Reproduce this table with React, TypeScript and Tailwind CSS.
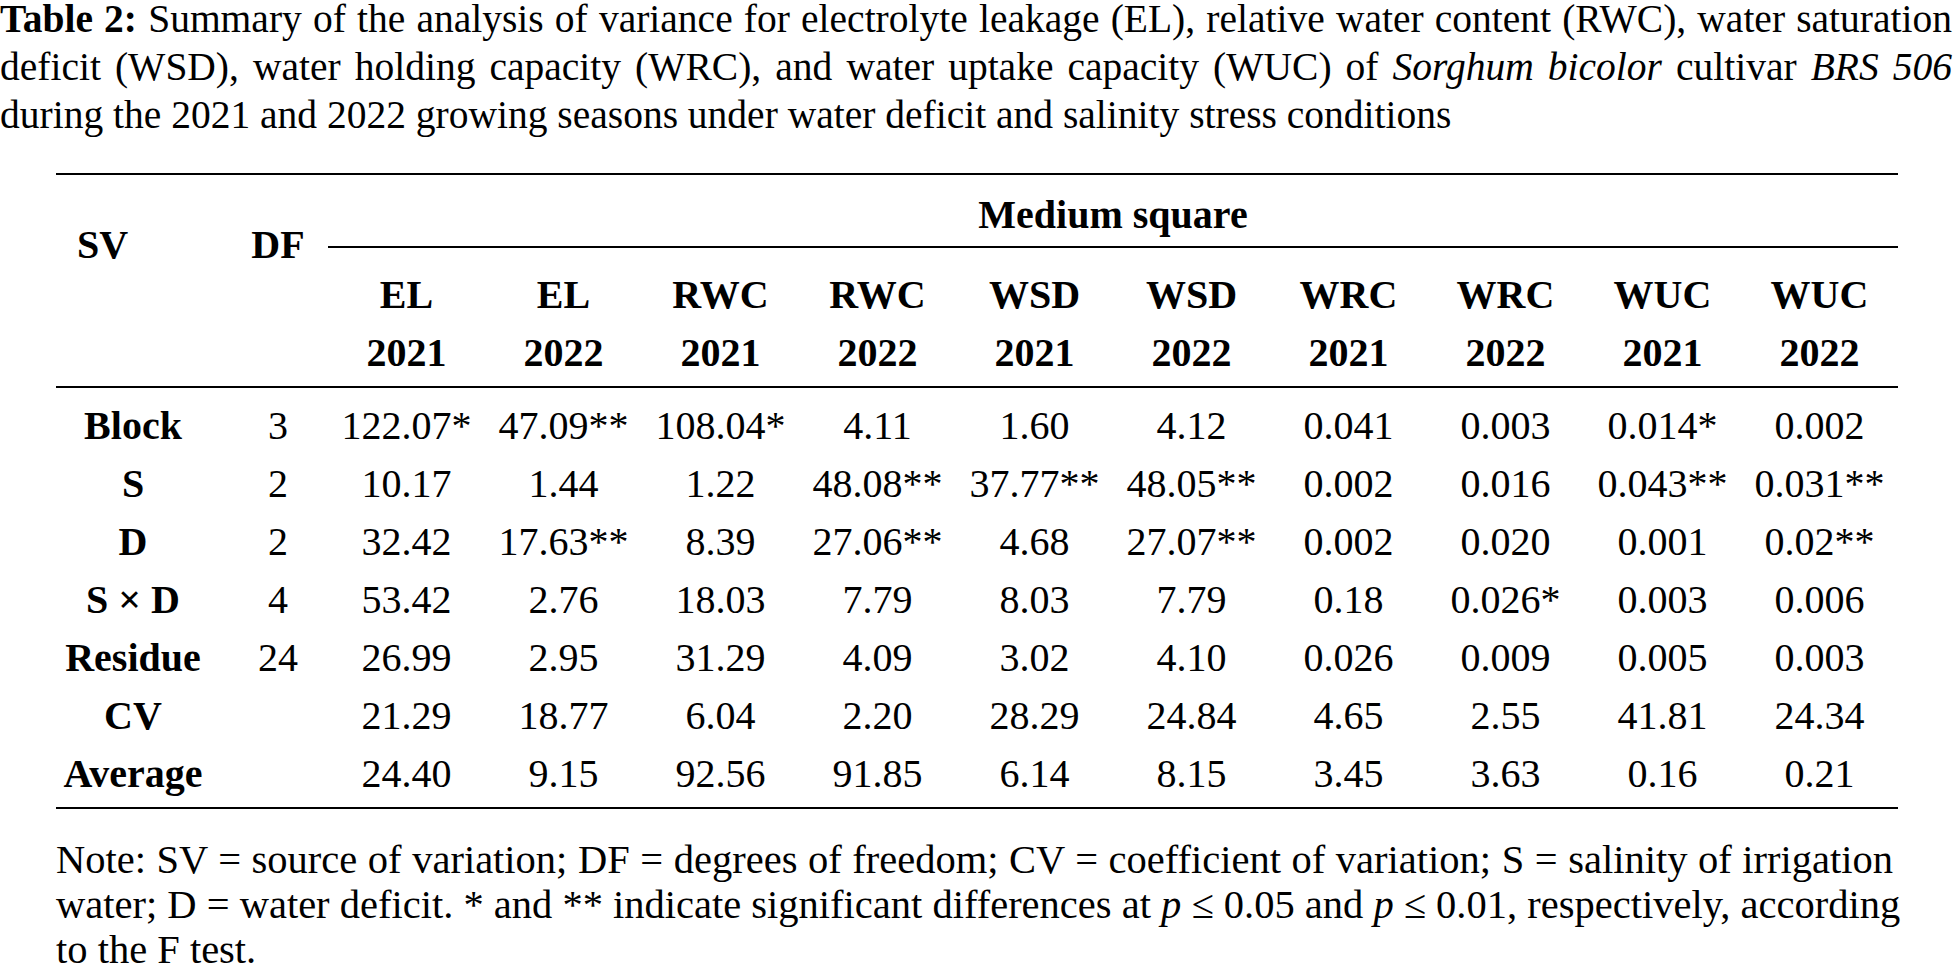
const heads = [
  ["EL", "2021"],
  ["EL", "2022"],
  ["RWC", "2021"],
  ["RWC", "2022"],
  ["WSD", "2021"],
  ["WSD", "2022"],
  ["WRC", "2021"],
  ["WRC", "2022"],
  ["WUC", "2021"],
  ["WUC", "2022"],
]

const rows = [
  { sv: "Block", df: "3", v: ["122.07*", "47.09**", "108.04*", "4.11", "1.60", "4.12", "0.041", "0.003", "0.014*", "0.002"] },
  { sv: "S", df: "2", v: ["10.17", "1.44", "1.22", "48.08**", "37.77**", "48.05**", "0.002", "0.016", "0.043**", "0.031**"] },
  { sv: "D", df: "2", v: ["32.42", "17.63**", "8.39", "27.06**", "4.68", "27.07**", "0.002", "0.020", "0.001", "0.02**"] },
  { sv: "S × D", df: "4", v: ["53.42", "2.76", "18.03", "7.79", "8.03", "7.79", "0.18", "0.026*", "0.003", "0.006"] },
  { sv: "Residue", df: "24", v: ["26.99", "2.95", "31.29", "4.09", "3.02", "4.10", "0.026", "0.009", "0.005", "0.003"] },
  { sv: "CV", df: "", v: ["21.29", "18.77", "6.04", "2.20", "28.29", "24.84", "4.65", "2.55", "41.81", "24.34"] },
  { sv: "Average", df: "", v: ["24.40", "9.15", "92.56", "91.85", "6.14", "8.15", "3.45", "3.63", "0.16", "0.21"] },
]

export default function App() {
  return (
    <div className="min-h-screen bg-white text-black font-['Liberation_Serif',serif]">
      {/* Caption */}
      <div className="-mt-[5px] w-[1952px] text-[39.5px] leading-[48px]">
        <div className="whitespace-nowrap text-justify [text-align-last:justify]">
          <b>Table 2:</b> Summary of the analysis of variance for electrolyte leakage (EL), relative water content (RWC), water saturation
        </div>
        <div className="whitespace-nowrap text-justify [text-align-last:justify]">
          deficit (WSD), water holding capacity (WRC), and water uptake capacity (WUC) of <i>Sorghum bicolor</i> cultivar <i>BRS 506</i>
        </div>
        <div className="whitespace-nowrap">
          during the 2021 and 2022 growing seasons under water deficit and salinity stress conditions
        </div>
      </div>

      {/* Table */}
      <div className="ml-[56px] mt-[34px] w-[1842px] border-t-2 border-black text-[40px]">
        <div className="flex h-[213px] border-b-2 border-black">
          <div className="w-[154px] pl-[21px] pt-[40.5px] font-bold leading-[58px]">SV</div>
          <div className="w-[118px] pl-[18px] pt-[40.5px] text-center font-bold leading-[58px]">DF</div>
          <div className="flex flex-1 flex-col">
            <div className="h-[73px] border-b-2 border-black pt-[10.5px] text-center font-bold leading-[58px]">
              Medium square
            </div>
            <div className="grid grid-cols-10 pt-[17.5px] font-bold leading-[58px]">
              {heads.map(([a, b], i) => (
                <div key={i} className="text-center">
                  <div>{a}</div>
                  <div>{b}</div>
                </div>
              ))}
            </div>
          </div>
        </div>

        <div className="border-b-2 border-black pt-[9px] pb-[4px] leading-[58px]">
          {rows.map((r) => (
            <div key={r.sv} className="flex h-[58px]">
              <div className="w-[154px] text-center font-bold">{r.sv}</div>
              <div className="w-[118px] pl-[18px] text-center">{r.df}</div>
              <div className="grid flex-1 grid-cols-10">
                {r.v.map((v, i) => (
                  <div key={i} className="whitespace-nowrap text-center">{v}</div>
                ))}
              </div>
            </div>
          ))}
        </div>
      </div>

      {/* Note */}
      <div className="ml-[56px] mt-[28px] w-[1837px] text-[40.5px] leading-[45px]">
        <div className="whitespace-nowrap text-justify [text-align-last:justify]">
          Note: SV = source of variation; DF = degrees of freedom; CV = coefficient of variation; S = salinity of irrigation
        </div>
        <div className="whitespace-nowrap text-justify [text-align-last:justify]">
          water; D = water deficit. * and ** indicate significant differences at <i>p</i> ≤ 0.05 and <i>p</i> ≤ 0.01, respectively, according
        </div>
        <div className="whitespace-nowrap">to the F test.</div>
      </div>
    </div>
  )
}
